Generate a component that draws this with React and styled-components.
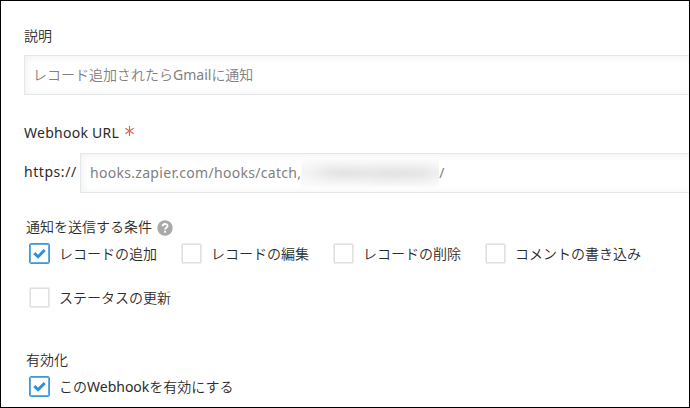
import React from "react";
import styled, { createGlobalStyle } from "styled-components";

const GlobalStyle = createGlobalStyle`
  * { box-sizing: border-box; }
  body {
    margin: 0;
    background: #fff;
    color: #2b2b2b;
    font: 350 14px/20px "Noto Sans", "Noto Sans CJK JP", sans-serif;
  }
`;

const Panel = styled.main`
  width: 690px;
  height: 408px;
  border: 1px solid #000;
  padding: 25px 0 0 23px;
  overflow: hidden;
  white-space: nowrap;
`;

const Latin = styled.span`
  font-weight: 400;
  letter-spacing: ${(p) => p.$track || 0}px;
`;

const Field = styled.section`
  margin-bottom: ${(p) => p.$bottom}px;
`;

const Label = styled.div`
  display: flex;
  align-items: center;
  height: 20px;
  margin-bottom: ${(p) => p.$gap || 9}px;
`;

const Required = styled.svg`
  width: 9px;
  height: 10px;
  margin: -5px 0 0 6px;
`;

const InputRow = styled.div`
  display: flex;
  align-items: center;
`;

const Prefix = styled.span`
  width: 56px;
  height: 22px;
  flex: none;
`;

const Input = styled.div`
  flex: 1;
  display: flex;
  align-items: center;
  height: 40px;
  padding-left: ${(p) => p.$pad || 8}px;
  border: 1px solid #e3e7e8;
  border-right: 0;
  box-shadow: inset 4px 4px 8px -3px #f0f0f0, inset 0 -4px 8px -4px #f4f4f4;
  color: #808080;
`;

const Redacted = styled.span`
  width: 138px;
  height: 28px;
  background:
    radial-gradient(ellipse 26px 11px at 30% 48%, rgba(170, 170, 170, 0.1), transparent),
    radial-gradient(ellipse 60px 12px at 68% 54%, rgba(165, 165, 165, 0.1), transparent),
    linear-gradient(#fafafa, #ebebeb 45%, #ebebeb 55%, #fafafa);
  -webkit-mask-image: linear-gradient(90deg, rgba(0,0,0,.5), #000 20%, #000 88%, rgba(0,0,0,.7));
  mask-image: linear-gradient(90deg, rgba(0,0,0,.5), #000 20%, #000 88%, rgba(0,0,0,.7));
`;

const Group = styled.section`
  padding-left: 2px;
  margin-top: ${(p) => p.$top}px;
`;

const GroupLabel = styled.div`
  display: flex;
  align-items: center;
  height: 20px;
  margin-bottom: 6px;
`;

const HelpIcon = styled.svg`
  width: 16px;
  height: 16px;
  margin: 2px 0 0 5px;
`;

const Options = styled.div`
  display: grid;
  grid-template-columns: repeat(4, 152px);
  row-gap: 23px;
  padding-left: 3px;
`;

const Option = styled.div`
  display: flex;
  align-items: center;
  height: 21px;
  gap: 9px;
`;

const Box = styled.span`
  width: 21px;
  height: 21px;
  flex: none;
  display: grid;
  place-items: center;
  border: 1px solid ${(p) => (p.$checked ? "#3c9adc" : "#ececec")};
  border-radius: 2px;
  box-shadow: inset 0 0 0 1px ${(p) => (p.$checked ? "#62aee4" : "#e0e0e0")};
`;

const Check = styled.svg`
  width: 13px;
  height: 11px;
`;

function Checkbox({ checked, children }) {
  return (
    <Option>
      <Box $checked={checked}>
        {checked && (
          <Check viewBox="0 0 13 11">
            <path d="M1.3 5.1 L5.1 8.7 L11.7 1.9" fill="none" stroke="#2d8fd8" strokeWidth="2.9" />
          </Check>
        )}
      </Box>
      <span>{children}</span>
    </Option>
  );
}

export default function App() {
  return (
    <>
      <GlobalStyle />
      <Panel>
        <Field $bottom={28}>
          <Label>説明</Label>
          <Input>
            <span>レコード追加されたら<Latin>Gmail</Latin>に通知</span>
          </Input>
        </Field>
        <Field $bottom={24}>
          <Label $gap={10}>
            <Latin $track={0.27}>Webhook URL</Latin>
            <Required viewBox="0 0 9 10">
              <path d="M4.5 0V10M0.3 2.3L8.7 7.7M8.7 2.3L0.3 7.7" stroke="#e8604c" strokeWidth="1.1" />
            </Required>
          </Label>
          <InputRow>
            <Prefix><Latin $track={0.55}>https://</Latin></Prefix>
            <Input $pad={9}>
              <Latin $track={0.3}>hooks.zapier.com/hooks/catch,</Latin>
              <Redacted />
              <Latin>/</Latin>
            </Input>
          </InputRow>
        </Field>
        <Group $top={0}>
          <GroupLabel>
            通知を送信する条件
            <HelpIcon viewBox="0 0 16 16">
              <circle cx="8" cy="8" r="7.7" fill="#a9a9a9" />
              <path d="M5.6 6.3C5.6 3.2 10.5 3.2 10.5 6C10.5 7.9 8.1 7.7 8.1 9.6" fill="none" stroke="#fff" strokeWidth="1.9" />
              <rect x="7.1" y="10.7" width="2" height="2" fill="#fff" />
            </HelpIcon>
          </GroupLabel>
          <Options>
            <Checkbox checked>レコードの追加</Checkbox>
            <Checkbox>レコードの編集</Checkbox>
            <Checkbox>レコードの削除</Checkbox>
            <Checkbox>コメントの書き込み</Checkbox>
            <Checkbox>ステータスの更新</Checkbox>
          </Options>
        </Group>
        <Group $top={42}>
          <GroupLabel>有効化</GroupLabel>
          <Options>
            <Checkbox checked>この<Latin>Webhook</Latin>を有効にする</Checkbox>
          </Options>
        </Group>
      </Panel>
    </>
  );
}
